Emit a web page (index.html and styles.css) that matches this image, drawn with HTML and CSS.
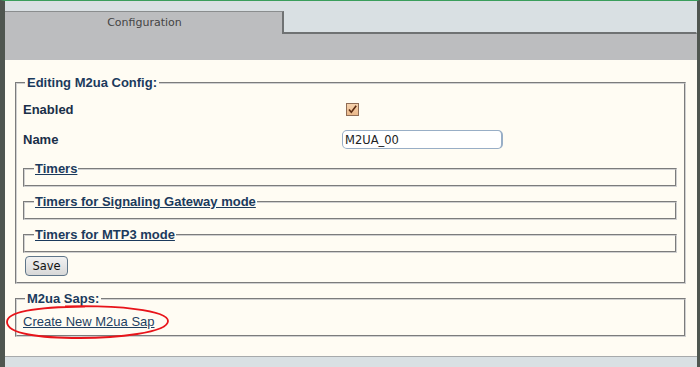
FILE: index.html
```html
<!DOCTYPE html>
<html>
<head>
<meta charset="utf-8">
<link rel="stylesheet" href="styles.css">
</head>
<body>
<div class="page">
  <div class="topbar">
    <div class="tab">Configuration</div>
    <div class="tab-rest"></div>
  </div>
  <div class="band"></div>
  <div class="content">
    <fieldset class="box main">
      <legend>Editing M2ua Config:</legend>
      <div class="form-grid">
        <div class="label">Enabled</div>
        <div class="cell"><span class="check"><svg width="13" height="13" viewBox="0 0 13 13"><path d="M3 6.5 L5.3 9.2 L10.2 2.8" fill="none" stroke="#5a2a10" stroke-width="1.6"/></svg></span></div>
        <div class="label">Name</div>
        <div class="cell"><input class="text" type="text" value="M2UA_00"></div>
      </div>
      <fieldset class="sub first"><legend><a href="#">Timers</a></legend></fieldset>
      <fieldset class="sub"><legend><a href="#">Timers for Signaling Gateway mode</a></legend></fieldset>
      <fieldset class="sub"><legend><a href="#">Timers for MTP3 mode</a></legend></fieldset>
      <button class="btn" type="button">Save</button>
    </fieldset>
    <fieldset class="box saps">
      <legend>M2ua Saps:</legend>
      <a class="create" href="#">Create New M2ua Sap</a>
    </fieldset>
    <svg class="circle" width="166" height="36" viewBox="0 0 166 36"><path d="M60 2.5 C110 1, 163 6, 163 17 C163 29, 110 34, 75 34 C35 34, 2 30, 2 18 C2 8, 30 3, 80 2.5" fill="none" stroke="#e8141a" stroke-width="1.8"/></svg>
  </div>
  <div class="footer"></div>
</div>
</body>
</html>
```

FILE: styles.css
```css
html, body {
  margin: 0;
  padding: 0;
}
body {
  width: 700px;
  height: 367px;
  overflow: hidden;
  font-family: "Liberation Sans", Arial, sans-serif;
  font-size: 13px;
  color: #1b3450;
}
.page {
  box-sizing: border-box;
  height: 367px;
  display: flex;
  flex-direction: column;
  border-top: 1px solid #3a9e5c;
  border-left: 5px solid #4f5650;
  border-right: 3px solid #4f5650;
  background: #d9e0e3;
}
.topbar {
  display: flex;
  height: 33px;
  align-items: flex-end;
}
.tab {
  box-sizing: border-box;
  width: 279px;
  height: 23px;
  background: #bcbdbf;
  border-top: 1px solid #8a8d8e;
  border-right: 2px solid #6f7273;
  font-family: "DejaVu Sans", sans-serif;
  font-size: 11px;
  color: #444;
  text-align: center;
  padding-top: 4px;
  padding-left: 2px;
}
.tab-rest {
  flex: 1;
  border-bottom: 2px solid #6f7273;
  border-right: 1px solid #c8cdd0;
}
.band {
  height: 26px;
  background: #bcbdbf;
}
.content {
  position: relative;
  flex: 1;
  background: #fffcf3;
  padding: 15px 11px 0 10px;
}
.box {
  margin: 0;
  border: 2px groove #d0d0d0;
  padding: 0 7px 6px 6px;
}
.box > legend {
  font-weight: bold;
  font-size: 13px;
  padding: 0 2px;
  margin-left: 2px;
  color: #1b3a5c;
}
.form-grid {
  display: grid;
  grid-template-columns: 319px 1fr;
  grid-template-rows: 29px 31px;
  align-items: center;
  margin-top: 5px;
}
.label {
  font-weight: bold;
  color: #1a2f48;
}
.check {
  display: block;
  width: 13px;
  height: 13px;
  margin-left: 4px;
  box-sizing: border-box;
  border: 1px solid #8f6c55;
  background: linear-gradient(#f6d2ad, #eab88a);
}
.check svg {
  display: block;
  margin: -1px 0 0 -1px;
}
.text {
  box-sizing: border-box;
  width: 161px;
  height: 19px;
  border: 1px solid #98aec6;
  border-radius: 5px;
  background: #fff;
  font-family: "DejaVu Sans", sans-serif;
  font-size: 11.5px;
  color: #222;
  padding: 0 3px 0 2px;
  margin: 0;
  outline: none;
  border-right-width: 2px;
}
.sub {
  margin: 7px 0 0 0;
  border: 2px groove #d0d0d0;
  padding: 0 0 9px 0;
}
.sub.first {
  margin-top: 6px;
}
.sub legend {
  padding: 0 1px;
  margin-left: 9px;
  font-weight: bold;
  font-size: 13px;
  line-height: 15px;
}
.sub legend a {
  color: #1b3a5c;
}
.btn {
  display: block;
  margin: 3px 0 0 2px;
  width: 43px;
  height: 20px;
  box-sizing: border-box;
  border: 1px solid #5f7589;
  border-radius: 4px;
  background: linear-gradient(#f2f2f2, #d8d8d8);
  font-family: "DejaVu Sans", sans-serif;
  font-size: 11.5px;
  color: #111;
  padding: 0;
}
.saps {
  margin-top: 7px;
  padding: 8px 7px 6px 6px;
}
.create {
  display: inline-block;
  color: #1e3f62;
  font-size: 13px;
  margin-left: 0;
}
.circle {
  position: absolute;
  left: 0;
  top: 244px;
}
.footer {
  height: 10px;
  background: #d9e0e3;
  border-top: 1px solid #a7aaab;
}
```
